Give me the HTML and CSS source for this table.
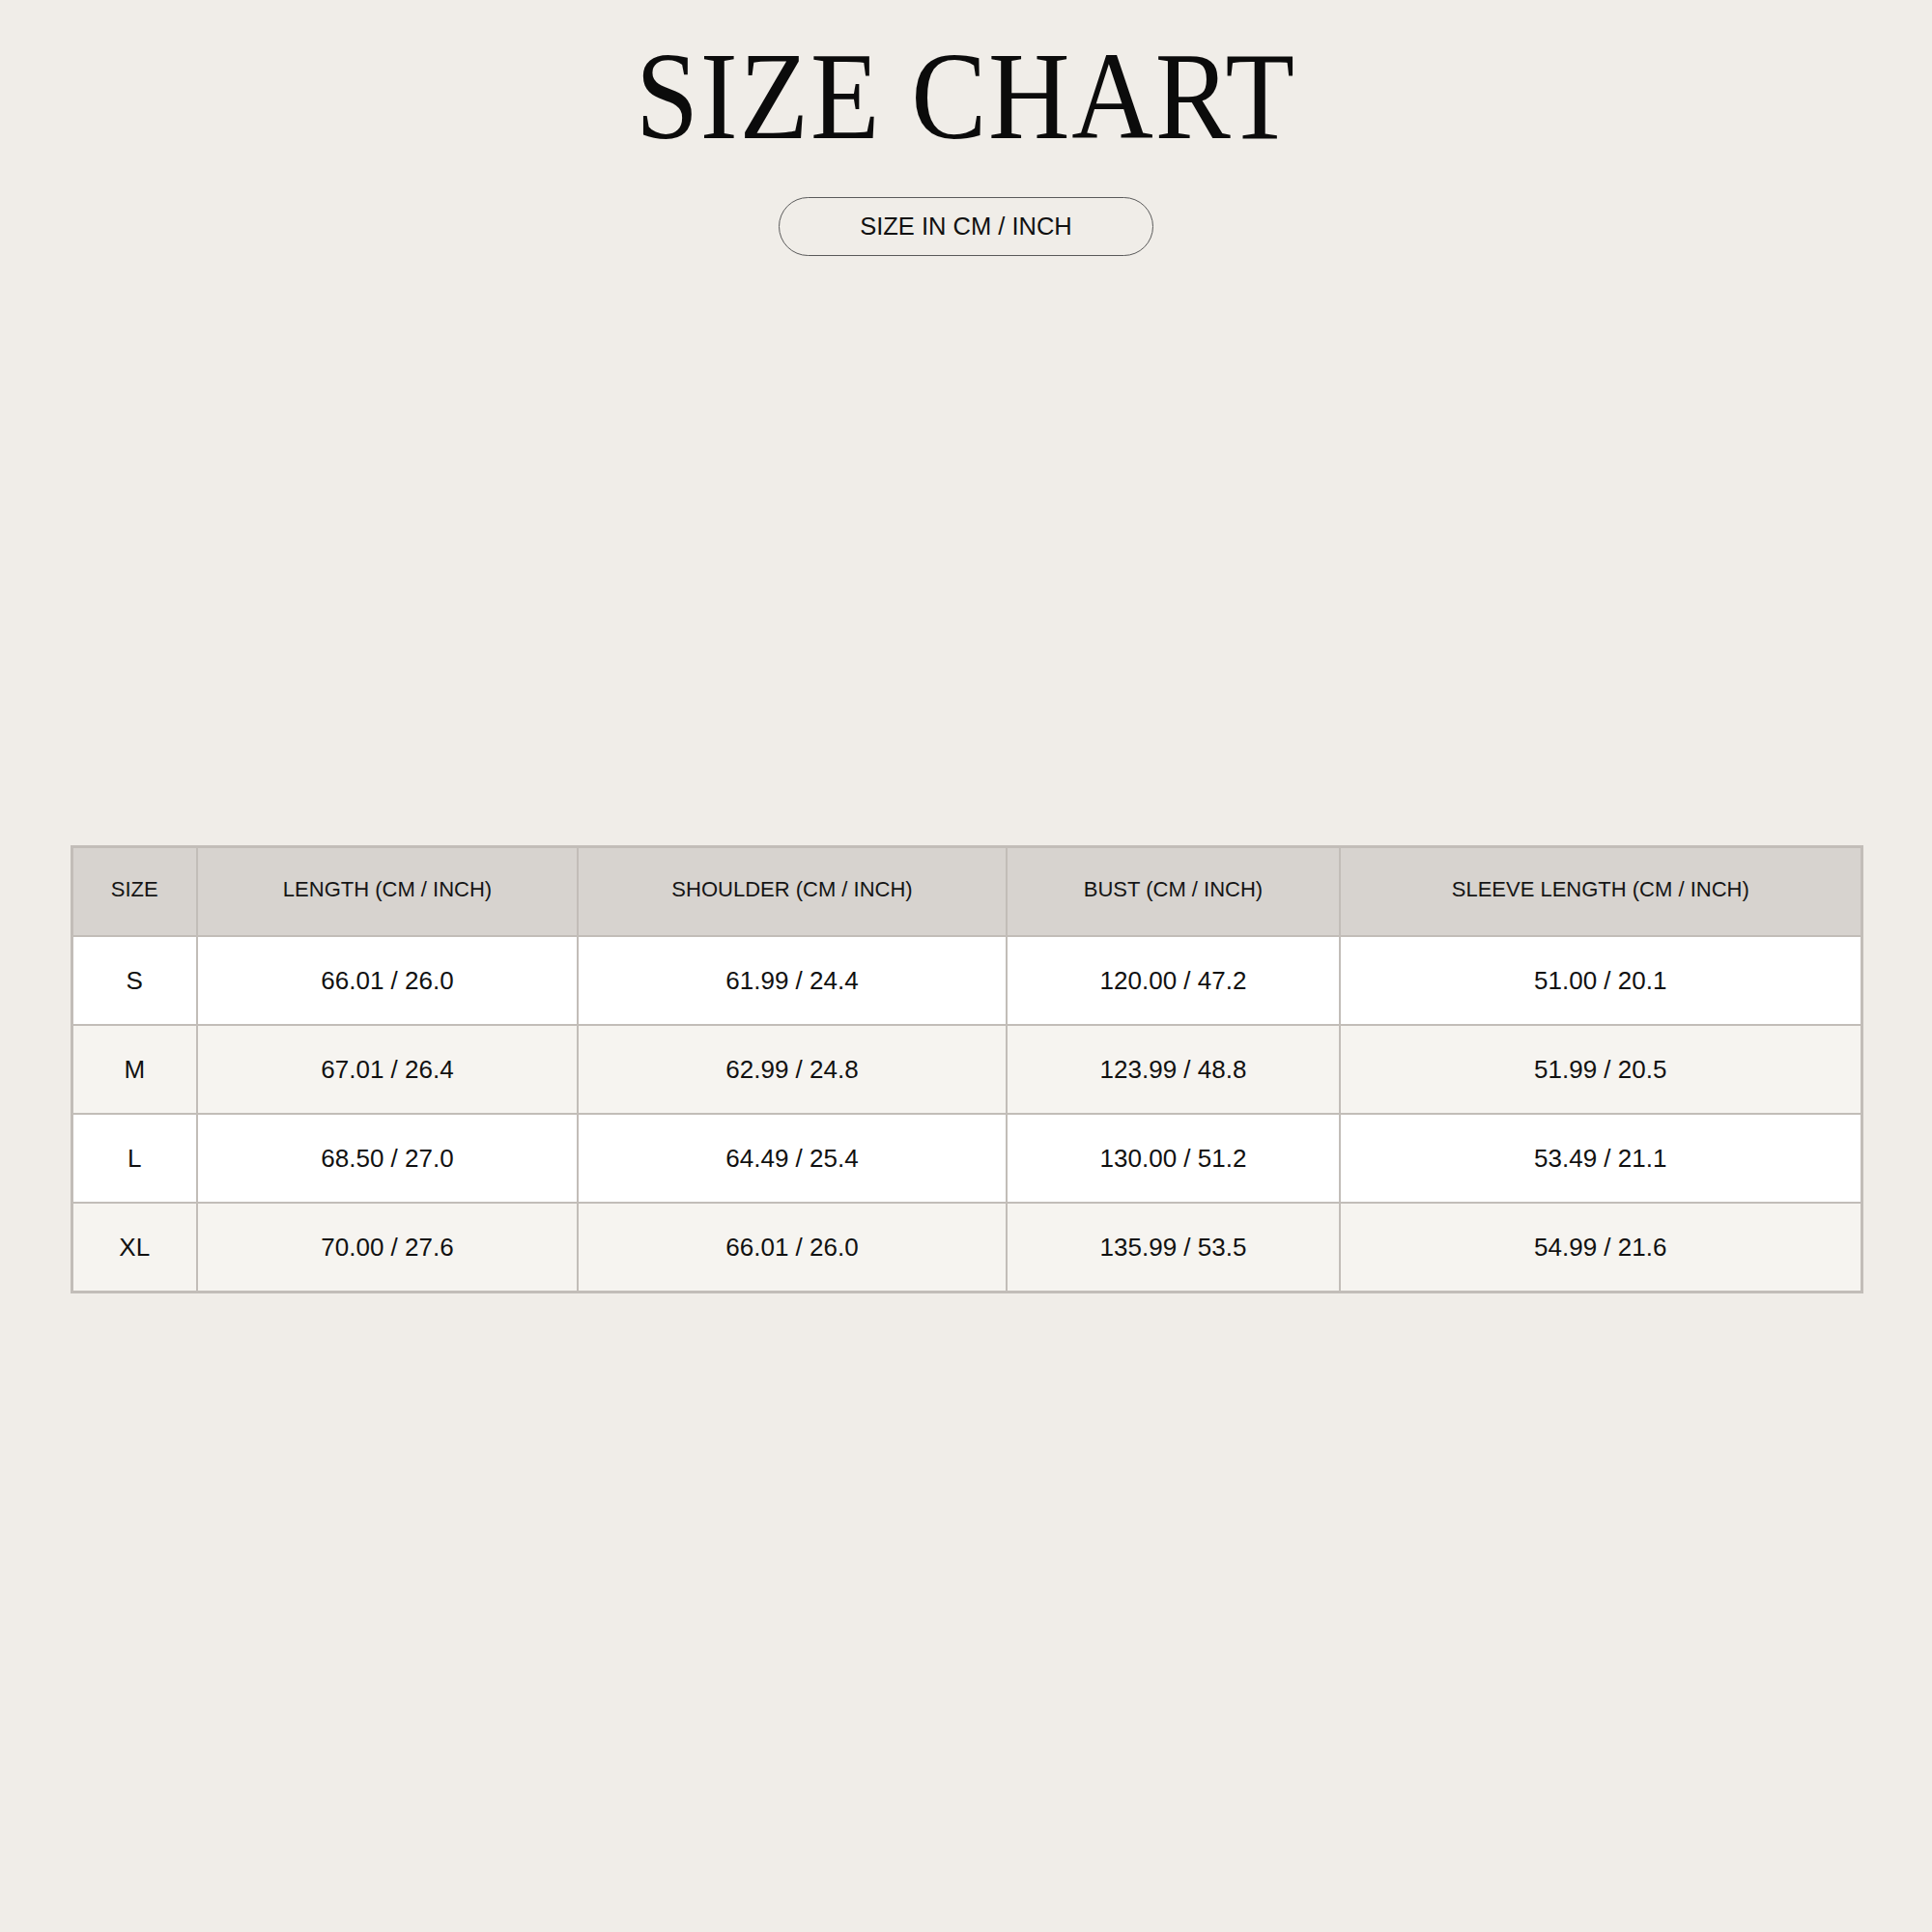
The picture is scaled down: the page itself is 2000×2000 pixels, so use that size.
FILE: index.html
```html
<!DOCTYPE html>
<html lang="en">
<head>
<meta charset="utf-8">
<title>Size Chart</title>
<link rel="stylesheet" href="styles.css">
</head>
<body>
<main class="page">
  <header class="hero">
    <h1 class="title"><span class="title-text">SIZE CHART</span></h1>
    <div class="pill">SIZE IN CM / INCH</div>
  </header>
  <table class="chart">
    <colgroup>
      <col class="c-size">
      <col class="c-length">
      <col class="c-shoulder">
      <col class="c-bust">
      <col class="c-sleeve">
    </colgroup>
    <thead>
      <tr>
        <th>SIZE</th>
        <th>LENGTH (CM / INCH)</th>
        <th>SHOULDER (CM / INCH)</th>
        <th>BUST (CM / INCH)</th>
        <th>SLEEVE LENGTH (CM / INCH)</th>
      </tr>
    </thead>
    <tbody>
      <tr><td>S</td><td>66.01 / 26.0</td><td>61.99 / 24.4</td><td>120.00 / 47.2</td><td>51.00 / 20.1</td></tr>
      <tr><td>M</td><td>67.01 / 26.4</td><td>62.99 / 24.8</td><td>123.99 / 48.8</td><td>51.99 / 20.5</td></tr>
      <tr><td>L</td><td>68.50 / 27.0</td><td>64.49 / 25.4</td><td>130.00 / 51.2</td><td>53.49 / 21.1</td></tr>
      <tr><td>XL</td><td>70.00 / 27.6</td><td>66.01 / 26.0</td><td>135.99 / 53.5</td><td>54.99 / 21.6</td></tr>
    </tbody>
  </table>
</main>
</body>
</html>
```

FILE: styles.css
```css
html, body {
  margin: 0;
  padding: 0;
  background: #f0ede8;
}

body {
  width: 2000px;
  height: 2000px;
  font-family: "Liberation Sans", Arial, sans-serif;
  color: #111;
}

.page {
  display: flex;
  flex-direction: column;
  align-items: center;
}

.hero {
  display: flex;
  flex-direction: column;
  align-items: center;
  padding-top: 34px;
}

.title {
  margin: 0;
  font-family: "Liberation Serif", "Times New Roman", serif;
  font-weight: 400;
  font-size: 130px;
  line-height: 130px;
  height: 130px;
  color: #0b0b0b;
}

.title-text {
  display: inline-block;
  transform: scaleX(0.9);
  transform-origin: center;
  letter-spacing: 2px;
}

.pill {
  margin-top: 40px;
  width: 388px;
  height: 61px;
  box-sizing: border-box;
  border: 1.5px solid #5a5a5a;
  border-radius: 31px;
  display: flex;
  align-items: center;
  justify-content: center;
  font-size: 25.5px;
  color: #111;
}

.chart {
  margin-top: 610px;
  margin-left: 1px;
  width: 1853px;
  table-layout: fixed;
  border-collapse: collapse;
  border: 3px solid #c2bdb8;
}

.c-size { width: 130px; }
.c-length { width: 394px; }
.c-shoulder { width: 444px; }
.c-bust { width: 345px; }
.c-sleeve { width: 540px; }

.chart th,
.chart td {
  border: 2px solid #c2bdb8;
  text-align: center;
  vertical-align: middle;
  padding: 0;
  height: 90px;
}

.chart th {
  background: #d7d3cf;
  font-weight: 400;
  font-size: 22px;
  color: #151515;
  height: 86px;
  padding-bottom: 4px;
}

.chart td {
  font-size: 26px;
  color: #111;
}

.chart tbody tr:nth-child(odd) td {
  background: #ffffff;
}

.chart tbody tr:nth-child(even) td {
  background: #f6f4f0;
}
```
